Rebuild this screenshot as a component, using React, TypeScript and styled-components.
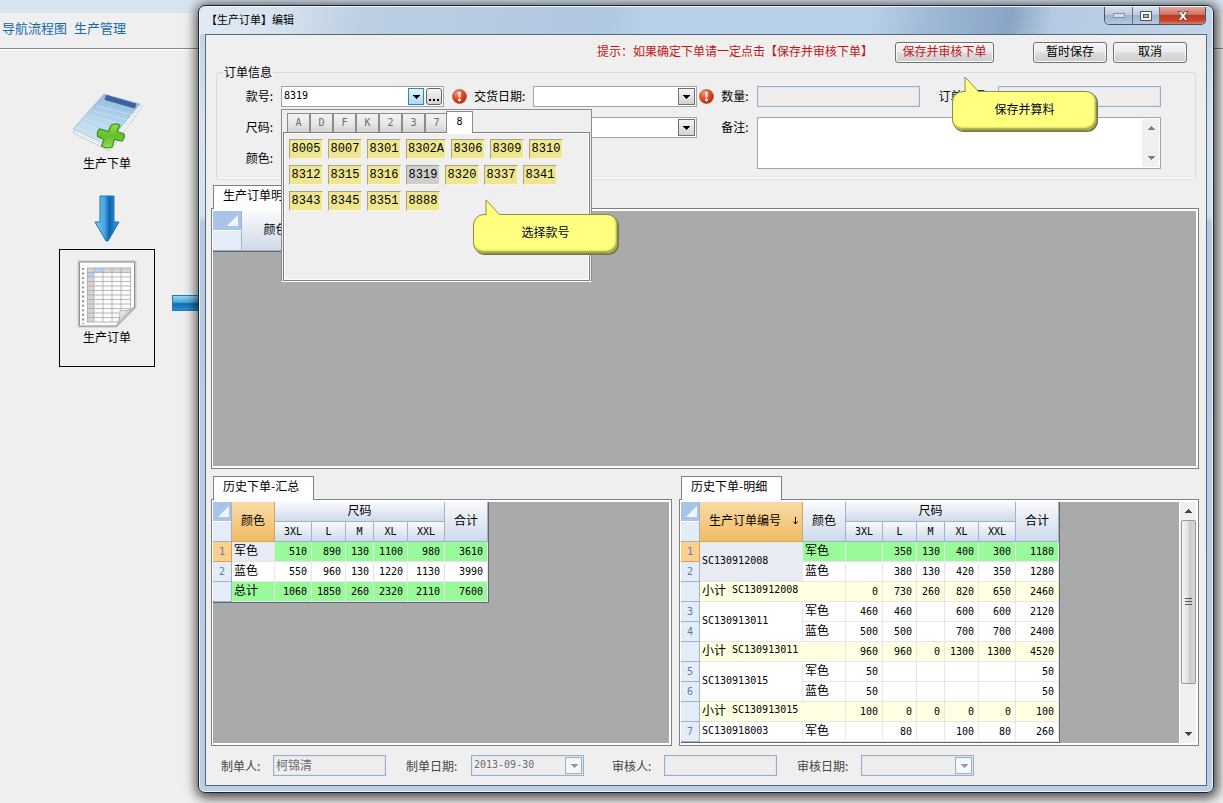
import React, { useState } from "react";
import styled, { createGlobalStyle, css } from "styled-components";

const GlobalStyle = createGlobalStyle`
  *, *::before, *::after { box-sizing: border-box; }
  html, body, #root { height: 100%; }
  body {
    margin: 0;
    background: #efefef;
    color: #000;
    font: 12px/14px "Noto Sans CJK SC", sans-serif;
    overflow: hidden;
  }
  button, input, select, textarea { font: inherit; color: inherit; margin: 0; }
`;

const mono = css`
  font-family: "DejaVu Sans Mono", "Noto Sans CJK SC", monospace;
  font-size: 10px;
`;

/* ---------- desktop ---------- */

const Desktop = styled.div`
  position: relative;
  height: 100%;
  min-height: 600px;
  overflow: hidden;
`;

const TopStrip = styled.div`
  height: 13px;
  background: #d8e4f2;
`;

const NavBar = styled.nav`
  display: flex;
  gap: 7px;
  height: 36px;
  padding: 6px 2px 0;
  border-bottom: 1px solid #868686;
  box-shadow: 0 1px 0 #fff;
  font-size: 13px;
  line-height: 18px;
`;

const NavLink = styled.a`
  color: #1868a8;
  text-decoration: none;
`;

const Flow = styled.aside`
  display: flex;
  flex-direction: column;
  width: 198px;
  padding: 41px 0 0 59px;
`;

const FlowNode = styled.button<{ $selected?: boolean }>`
  display: flex;
  flex-direction: column;
  align-items: center;
  flex: none;
  gap: ${(p) => (p.$selected ? "2px" : "3px")};
  width: 96px;
  height: ${(p) => (p.$selected ? "118px" : "100px")};
  padding: ${(p) => (p.$selected ? "10px 0 0" : "2px 0 0")};
  border: 1px solid ${(p) => (p.$selected ? "#000" : "transparent")};
  background: none;
`;

const FlowArrow = styled.div`
  width: 96px;
  height: 54px;
  padding-top: 2px;
  text-align: center;
  margin-top: 3px;
`;

const FlowRow = styled.div`
  display: flex;
  align-items: center;
  gap: 17px;
  margin-top: 2px;
`;

const FlowLink = styled.div`
  flex: 1;
  height: 16px;
  margin-bottom: 11px;
  border: 1px solid #2878b8;
  border-right: 0;
  background: linear-gradient(#9ad4f4, #4aa6dc 45%, #0f6eb4 55%, #2c8ccc);
`;

/* ---------- window ---------- */

const WindowFrame = styled.section`
  position: absolute;
  inset: 5px 9px 10px 198px;
  display: flex;
  flex-direction: column;
  padding: 0 6px 6px;
  border: 1px solid #1c2530;
  border-radius: 7px;
  background: linear-gradient(#bdd0e6 0, #d6e2f0 120px, #d2e0f0 210px, #b4c9e2 216px, #b9cfe6 100%);
  box-shadow: inset 0 0 0 1px #eef5fc, 1px 2px 12px 3px rgba(0, 0, 0, 0.7);
`;

const TitleBar = styled.header`
  display: flex;
  justify-content: space-between;
  flex: none;
  height: 27px;
  margin: 1px -5px 0;
  padding-left: 6px;
  border-radius: 6px 6px 0 0;
  background: linear-gradient(100deg, #e2ebf5 0, #d3e0ee 9%, #bccfe3 16%, #b0c7e0 40%, #b9d0ea 44%, #b9d0ea 66%, #9fb9d6 72%, #89a5c6 80%, #b4cae2 84%, #c3d5e9 100%);
`;

const Title = styled.h1`
  margin: 0;
  padding-top: 5px;
  font-size: 11px;
  font-weight: 400;
  line-height: 14px;
`;

const Caption = styled.div`
  display: flex;
  height: 18px;
  margin-right: 6px;
  border: 1px solid #46566a;
  border-top: 0;
  border-radius: 0 0 5px 5px;
  overflow: hidden;
`;

const CaptionButton = styled.button<{ $close?: boolean }>`
  display: grid;
  place-items: center;
  width: ${(p) => (p.$close ? "46px" : "27px")};
  padding: 0;
  border: 0;
  border-left: 1px solid #5e7188;
  background: ${(p) =>
    p.$close
      ? "linear-gradient(#e3a89c, #d0705e 45%, #b93a26 50%, #c8452c 80%, #e07a58)"
      : "linear-gradient(#d6e2ee, #bccbdc 45%, #9fb2c8 50%, #b3c8dd)"};
  &:first-child { border-left: 0; }
`;

const Client = styled.main`
  flex: 1;
  display: flex;
  flex-direction: column;
  min-height: 0;
  border: 1px solid #566878;
  background: #efefef;
`;

/* ---------- toolbar ---------- */

const Toolbar = styled.div`
  display: flex;
  justify-content: flex-end;
  align-items: center;
  padding: 7px 19px 0 0;
`;

const Hint = styled.p`
  margin: 0 22px 0 0;
  padding-bottom: 3px;
  color: #c41414;
`;

const Anchor = styled.div`
  position: relative;
  margin-right: 39px;
`;

const PushButton = styled.button<{ $accent?: boolean }>`
  display: block;
  width: ${(p) => (p.$accent ? "99px" : "74px")};
  height: 21px;
  padding: 0 0 3px;
  border: 1px solid #707070;
  border-radius: 3px;
  background: linear-gradient(#f4f4f4, #ebebeb 48%, #dcdcdc 52%, #cecece);
  box-shadow: inset 0 0 0 1px #fafafa;
  color: ${(p) => (p.$accent ? "#c41414" : "#000")};
  line-height: 16px;
  white-space: nowrap;
  & + & { margin-left: 6px; }
`;

/* ---------- form ---------- */

const Group = styled.fieldset`
  flex: none;
  min-width: 0;
  margin: 2px 10px 0;
  padding: 7px 0 10px;
  border: 1px solid #d2dce2;
  border-radius: 3px;
  box-shadow: inset 0 -1px 0 #fff;
`;

const Legend = styled.legend`
  margin-left: 6px;
  padding: 0 1px;
  height: 14px;
`;

const FormGrid = styled.div`
  display: grid;
  grid-template-columns: 64px 1fr 89px 1fr 60px 1fr 78px 1fr;
  grid-auto-rows: 21px;
  row-gap: 10px;
  padding-right: 34px;
`;

const LabelCell = styled.div<{ $start?: boolean }>`
  display: flex;
  align-items: center;
  justify-content: flex-end;
  gap: 7px;
  padding: 0 8px 0 1px;
  grid-column-start: ${(p) => (p.$start ? 1 : "auto")};
  white-space: nowrap;
  label { padding-bottom: 2px; }
`;

const FieldCell = styled.div<{ $col?: string; $row?: string }>`
  position: relative;
  display: flex;
  min-width: 0;
  grid-column: ${(p) => p.$col || "auto"};
  grid-row: ${(p) => p.$row || "auto"};
`;

const Box = styled.div<{ $off?: boolean }>`
  display: flex;
  align-items: center;
  gap: 2px;
  width: 100%;
  height: 21px;
  padding-right: 1px;
  border: 1px solid ${(p) => (p.$off ? "#9aafc3" : "#a4a4a4")};
  background: ${(p) => (p.$off ? "#eeeeef" : "#fff")};
  box-shadow: ${(p) => (p.$off ? "inset 0 0 0 1px #dbe7f2" : "none")};
  color: ${(p) => (p.$off ? "#6d6d6d" : "#000")};
`;

const TextInput = styled.input<{ $mono?: boolean }>`
  flex: 1;
  min-width: 0;
  height: 17px;
  padding: 0 0 2px 2px;
  border: 0;
  outline: 0;
  background: transparent;
  ${(p) => p.$mono && mono}
`;

const Select = styled.select<{ $mono?: boolean }>`
  flex: 1;
  min-width: 0;
  height: 17px;
  padding: 0 0 2px 2px;
  border: 0;
  outline: 0;
  appearance: none;
  background: transparent;
  opacity: 1;
  ${(p) => p.$mono && mono}
`;

const MiniButton = styled.button<{ $hot?: boolean }>`
  display: grid;
  place-items: center;
  flex: none;
  width: 16px;
  height: 17px;
  padding: 0;
  border: 1px solid ${(p) => (p.$hot ? "#3c7fb1" : "#666")};
  border-radius: ${(p) => (p.$hot ? "0" : "3px")};
  background: ${(p) => (p.$hot ? "linear-gradient(#e4f4fc, #a9d9f2)" : "linear-gradient(#f6f6f6, #d4d4d4)")};
`;

const ArrowBox = styled.span<{ $off?: boolean }>`
  display: grid;
  place-items: center;
  flex: none;
  width: 17px;
  height: 17px;
  border: 1px solid ${(p) => (p.$off ? "#9aafc3" : "#707070")};
  background: ${(p) => (p.$off ? "#f4f6f8" : "linear-gradient(#f6f6f6, #d2d2d2)")};
  pointer-events: none;
`;

const MemoBox = styled.div`
  display: flex;
  width: 100%;
  border: 1px solid #a4a4a4;
  background: #fff;
`;

const Memo = styled.textarea`
  flex: 1;
  min-width: 0;
  padding: 2px;
  border: 0;
  outline: 0;
  resize: none;
  background: transparent;
  overflow: hidden;
`;

const MemoScroll = styled.div`
  display: flex;
  flex-direction: column;
  justify-content: space-between;
  align-items: center;
  width: 17px;
  margin: 1px;
  padding: 7px 0;
  background: #f0f0f0;
`;

/* ---------- style number picker ---------- */

const Picker = styled.div`
  position: absolute;
  z-index: 5;
  top: 23px;
  left: 0;
  width: 311px;
  height: 173px;
  display: flex;
  flex-direction: column;
  padding: 1px 1px 0;
  border: 1px solid #8c8c8c;
  border-bottom: 1px solid #fff;
  background: #efefef;
`;

const PickerTabs = styled.div`
  display: flex;
  align-items: flex-end;
  height: 21px;
  padding-left: 4px;
`;

const PickerTab = styled.button<{ $on?: boolean }>`
  position: relative;
  width: ${(p) => (p.$on ? "27px" : "23px")};
  height: ${(p) => (p.$on ? "22px" : "19px")};
  margin: ${(p) => (p.$on ? "0 0 -1px -2px" : "0")};
  padding: 0 0 1px;
  border: 1px solid #8c8c8c;
  border-bottom: 0;
  background: ${(p) => (p.$on ? "#fff" : "linear-gradient(#f2f2f2, #e8e8e8 50%, #d4d4d4)")};
  ${mono}
  color: ${(p) => (p.$on ? "#000" : "#6d6d6d")};
  & + & { border-left-width: ${(p) => (p.$on ? "1px" : "0")}; }
`;

const PickerPage = styled.div`
  flex: 1;
  display: flex;
  flex-wrap: wrap;
  align-content: flex-start;
  gap: 6px 5px;
  padding: 6px 5px;
  border: 1px solid #808080;
  box-shadow: inset 1px 1px 0 #fff, inset -1px -1px 0 #fff;
`;

const Code = styled.button<{ $on?: boolean }>`
  min-width: 34px;
  height: 20px;
  padding: 0 1px;
  border: 1px solid;
  border-color: #a8a48c #fbf8d8 #fbf8d8 #a8a48c;
  background: ${(p) => (p.$on ? "#cecece" : "#eee690")};
  font: 12px/16px "Liberation Mono", monospace;
`;

/* ---------- call-outs ---------- */

const Callout = styled.div<{ $x: number; $y: number }>`
  position: absolute;
  z-index: 10;
  left: ${(p) => p.$x}px;
  top: ${(p) => p.$y}px;
  width: 145px;
  height: 40px;
  display: grid;
  place-items: center;
  padding-bottom: 4px;
  border: 1px solid #8c8c50;
  border-radius: 11px;
  background: #ffff80;
  box-shadow: inset -1px -2px 2px #a0a040, 1px 1px 0 #77773c;
  color: #000030;
  svg { position: absolute; left: 11px; top: -16px; }
`;

/* ---------- tab panels ---------- */

const TabLabel = styled.h2`
  position: relative;
  z-index: 1;
  align-self: flex-start;
  flex: none;
  height: 24px;
  margin: 0 0 -1px 2px;
  padding: 2px 14px 0 9px;
  border: 1px solid #808080;
  border-bottom: 0;
  background: #fff;
  font-size: 12px;
  font-weight: 400;
  line-height: 14px;
`;

const Panel = styled.div`
  display: flex;
  flex: 1;
  min-height: 0;
  padding: 2px 2px 2px 1px;
  border: 1px solid #808080;
  background: #fff;
`;

const Surface = styled.div`
  flex: 1;
  min-width: 0;
  background: #aaa;
  overflow: hidden;
`;

const DetailArea = styled.section`
  display: flex;
  flex: 1;
  flex-direction: column;
  min-height: 0;
  margin: 5px 7px 7px 5px;
`;

const HistoryArea = styled.div`
  display: grid;
  grid-template-columns: 461fr 520fr;
  gap: 7px;
  flex: none;
  height: 270px;
  margin: 0 7px 0 5px;
`;

const HistoryPane = styled.section`
  display: flex;
  flex-direction: column;
  min-width: 0;
  min-height: 0;
`;

/* ---------- tables ---------- */

const Table = styled.table<{ $w: number }>`
  table-layout: fixed;
  width: ${(p) => p.$w}px;
  border-spacing: 0;
  border-right: 1px solid #5c6874;
  border-bottom: 1px solid #5c6874;
`;

const Head = styled.th<{ $hot?: boolean; $mono?: boolean }>`
  height: 20px;
  padding: ${(p) => (p.$mono ? "0" : "0 0 3px")};
  border: solid ${(p) => (p.$hot ? "#d8a45c" : "#9db3cc")};
  border-width: 0 1px 1px 0;
  background: ${(p) => (p.$hot ? "linear-gradient(#f9dba6, #f0bb62)" : "linear-gradient(#f8fafd, #cfdaea)")};
  font-weight: 400;
  line-height: 14px;
  ${(p) => p.$mono && mono}
`;

const Corner = styled.th<{ $wide?: boolean }>`
  height: 40px;
  padding: 0;
  border-right: 1px solid #9db3cc;
  border-bottom: 1px solid #9db3cc;
  background: linear-gradient(#a9c4e9 0 19px, #fff 19px 20px, #e4ecf7 20px);
  vertical-align: top;
  text-align: right;
  svg { display: block; margin: 4px ${(p) => (p.$wide ? "3px" : "2px")} 0 auto; }
`;

const RowHead = styled.th<{ $hot?: boolean }>`
  height: 20px;
  padding: 0;
  border-right: 1px solid ${(p) => (p.$hot ? "#e0a050" : "#9db3cc")};
  border-bottom: 1px solid ${(p) => (p.$hot ? "#e0a050" : "#9db3cc")};
  background: ${(p) => (p.$hot ? "#fad08c" : "#e4ecf7")};
  color: #5480ac;
  font-weight: 400;
  ${mono}
`;

const Cell = styled.td<{ $bg?: string; $num?: boolean }>`
  height: 20px;
  padding: ${(p) => (p.$num ? "0 4px 0 0" : "0 0 3px 2px")};
  border: solid #e6e6ea;
  border-width: 0 1px 1px 0;
  background: ${(p) => p.$bg || "#fff"};
  text-align: ${(p) => (p.$num ? "right" : "left")};
  line-height: 14px;
  white-space: nowrap;
  ${(p) => p.$num && mono}
`;

const Mono = styled.span`
  ${mono}
`;

const Subtotal = styled.span`
  display: flex;
  align-items: center;
  gap: 6px;
`;

const OrderHead = styled.span`
  display: flex;
  justify-content: space-between;
  align-items: center;
  padding: 0 3px 0 9px;
`;

/* ---------- scrollbar ---------- */

const ScrollTrack = styled.div`
  display: flex;
  flex-direction: column;
  align-items: center;
  flex: none;
  width: 17px;
  padding: 7px 0 7px;
  background: #f0f0f0;
  border-left: 1px solid #fff;
`;

const ScrollThumb = styled.div`
  display: grid;
  place-items: center;
  width: 15px;
  height: 164px;
  margin: 7px 0 auto;
  border: 1px solid #979797;
  border-radius: 2px;
  background: linear-gradient(90deg, #f4f4f4, #e4e4e4 45%, #c8c8c8 60%, #dadada);
`;

/* ---------- footer ---------- */

const Footer = styled.footer`
  display: flex;
  flex: none;
  align-items: center;
  height: 39px;
  padding-left: 15px;
  color: #444;
`;

const FooterField = styled.div<{ $label: number; $gap?: number }>`
  display: grid;
  grid-template-columns: ${(p) => p.$label}px 113px;
  align-items: center;
  margin-right: ${(p) => p.$gap || 20}px;
`;

/* ---------- drawings ---------- */

const Caret = ({ color = "#000", up = false }: { color?: string; up?: boolean }) => (
  <svg width="8" height="4" viewBox="0 0 8 4" shapeRendering="crispEdges" aria-hidden="true">
    <path d={up ? "M0 4L4 0L8 4Z" : "M0 0H8L4 4Z"} fill={color} />
  </svg>
);

const CornerMark = () => (
  <svg width="11" height="11" viewBox="0 0 11 11" aria-hidden="true">
    <path d="M11 0V11H0Z" fill="#f1f6fd" />
  </svg>
);

const ErrorIcon = () => (
  <svg width="15" height="15" viewBox="0 0 15 15" role="img" aria-label="必填">
    <defs>
      <radialGradient id="err" cx="0.35" cy="0.25" r="0.85">
        <stop offset="0" stopColor="#f79a78" />
        <stop offset="0.5" stopColor="#e04a22" />
        <stop offset="1" stopColor="#a82408" />
      </radialGradient>
    </defs>
    <circle cx="7.5" cy="7.5" r="7" fill="url(#err)" stroke="#b4401e" strokeWidth="0.6" />
    <path d="M6.2 2.8H8.8L8.3 8.6H6.7Z" fill="#fff" />
    <circle cx="7.5" cy="11" r="1.4" fill="#fff" />
  </svg>
);

const Tail = () => (
  <svg width="17" height="18" viewBox="0 0 17 18" aria-hidden="true">
    <path d="M1 17V1L15 16V18H1Z" fill="#ffff80" />
    <path d="M1 16V1L15 16" fill="none" stroke="#8c8c50" />
  </svg>
);

const NewOrderIcon = () => (
  <svg width="74" height="60" viewBox="0 0 74 60" aria-hidden="true">
    <defs>
      <linearGradient id="pad" x1="0.6" y1="0" x2="0.3" y2="1">
        <stop offset="0" stopColor="#8fb9de" />
        <stop offset="0.5" stopColor="#b5d5ea" />
        <stop offset="1" stopColor="#d3e8f3" />
      </linearGradient>
      <linearGradient id="plus" x1="0" y1="0" x2="0" y2="1">
        <stop offset="0" stopColor="#8fe050" />
        <stop offset="0.5" stopColor="#62c02c" />
        <stop offset="1" stopColor="#93dd58" />
      </linearGradient>
    </defs>
    <path d="M3 40L40 58L72 14L70 12L36 3Z" fill="#fff" stroke="#b4bcc4" strokeWidth="0.8" />
    <path d="M3 38L39 55L71 12" fill="none" stroke="#c4ccd4" strokeWidth="0.8" />
    <path d="M3 36L37 52L70 11L34 1Z" fill="url(#pad)" stroke="#8fb0cc" strokeWidth="0.6" />
    <path d="M36.500 2.500L66 11L64.500 15L35 6.500Z" fill="#3c649c" stroke="#3c649c" strokeLinejoin="round" />
    <path d="M27 13L62 22M23 18L58 27M19 22L54 32M15 26L50 37M11 30L45 42M7 34L40 47" stroke="#d8eaf5" strokeWidth="0.6" />
    <path
      d="M41 32.500C44 30.500 48 31 50 32L47 38.500L54 41C55 43 53.500 47 52 48L44.500 46.500L42 54C38 56 34 54.500 31.500 53L34 46.500L27.500 43.500C27 41 28 37.500 29.500 36L38.500 38.500Z"
      fill="url(#plus)"
      stroke="#3c8c18"
      strokeWidth="1.200"
    />
  </svg>
);

const DownArrowIcon = () => (
  <svg width="26" height="48" viewBox="0 0 26 48" aria-hidden="true">
    <defs>
      <linearGradient id="down" x1="0" x2="1">
        <stop offset="0.15" stopColor="#6cbcec" />
        <stop offset="0.4" stopColor="#4aa4e0" />
        <stop offset="0.6" stopColor="#0c62b0" />
        <stop offset="0.85" stopColor="#2a8cd4" />
      </linearGradient>
    </defs>
    <path d="M6 1H20V27H25L14 46H12L1 27H6Z" fill="url(#down)" stroke="#2474b4" />
  </svg>
);

const SheetIcon = () => (
  <svg width="60" height="68" viewBox="0 0 60 68" aria-hidden="true">
    <defs>
      <linearGradient id="curl" x1="0" y1="0" x2="1" y2="1">
        <stop offset="0.2" stopColor="#fff" />
        <stop offset="0.6" stopColor="#b4b4b4" />
        <stop offset="1" stopColor="#f4f4f4" />
      </linearGradient>
    </defs>
    <path d="M2 2H58V47L39 66H2Z" fill="none" stroke="#c8c8c8" strokeWidth="3" />
    <path d="M2.500 2H57.500V47L39 66H2.500Z" fill="#fbfbfb" stroke="#8e8e8e" />
    <path d="M10.500 8H53.500V12.500H10.500ZM10.500 8H17V62H10.500Z" fill="#d4d4d4" />
    <path d="M17 8H26V12H17ZM11 12H17V17H11Z" fill="#b3cdf8" />
    <path
      d="M10.500 8V62M17 8V62M26 8V62M35 8V62M44 8V53M53.500 8V48M10 8H54M10 12.500H54M10 17H54M10 21.500H54M10 26H54M10 30.500H54M10 35H54M10 39.500H54M10 44H54M10 48.500H54M10 53H42M10 57.500H42M10 62H41"
      stroke="#a9a9a9"
      strokeWidth="0.8"
    />
    <path d="M6 8V64" stroke="#808080" strokeWidth="1.800" strokeDasharray="1.800 2.800" />
    <path d="M58 47C53 51 47 51 43 50.500C43 57 42 62 39 66.500Z" fill="url(#curl)" stroke="#9a9a9a" strokeWidth="0.800" />
  </svg>
);

/* ---------- data ---------- */

const CODES = [
  "8005", "8007", "8301", "8302A", "8306", "8309", "8310",
  "8312", "8315", "8316", "8319", "8320", "8337", "8341",
  "8343", "8345", "8351", "8888",
];

const SIZES = ["3XL", "L", "M", "XL", "XXL"];
const SIZE_WIDTHS = [37, 34, 28, 34, 37, 43];

const SUMMARY = [
  { n: "1", color: "军色", v: [510, 890, 130, 1100, 980, 3610], bg: "#99fa99" },
  { n: "2", color: "蓝色", v: [550, 960, 130, 1220, 1130, 3990], bg: "#ffffff" },
  { n: "", color: "总计", v: [1060, 1850, 260, 2320, 2110, 7600], bg: "#99fa99" },
];

type DetailRow = { n: string; order?: string; span?: number; color?: string; subtotal?: string; v: (number | "")[] };

const DETAILS: DetailRow[] = [
  { n: "1", order: "SC130912008", span: 2, color: "军色", v: ["", 350, 130, 400, 300, 1180] },
  { n: "2", color: "蓝色", v: ["", 380, 130, 420, 350, 1280] },
  { n: "", subtotal: "SC130912008", v: [0, 730, 260, 820, 650, 2460] },
  { n: "3", order: "SC130913011", span: 2, color: "军色", v: [460, 460, "", 600, 600, 2120] },
  { n: "4", color: "蓝色", v: [500, 500, "", 700, 700, 2400] },
  { n: "", subtotal: "SC130913011", v: [960, 960, 0, 1300, 1300, 4520] },
  { n: "5", order: "SC130913015", span: 2, color: "军色", v: [50, "", "", "", "", 50] },
  { n: "6", color: "蓝色", v: [50, "", "", "", "", 50] },
  { n: "", subtotal: "SC130913015", v: [100, 0, 0, 0, 0, 100] },
  { n: "7", order: "SC130918003", span: 1, color: "军色", v: ["", 80, "", 100, 80, 260] },
];

const Cols = ({ lead }: { lead: number[] }) => (
  <colgroup>
    {[...lead, ...SIZE_WIDTHS].map((w, i) => (
      <col key={i} width={w} />
    ))}
  </colgroup>
);

const SizeHeads = () => (
  <tr>
    {SIZES.map((s) => (
      <Head key={s} $mono>{s}</Head>
    ))}
  </tr>
);

export default function App() {
  const [code, setCode] = useState("8319");

  return (
    <Desktop>
      <GlobalStyle />
      <TopStrip />
      <NavBar>
        <NavLink href="#flow">导航流程图</NavLink>
        <NavLink href="#production">生产管理</NavLink>
      </NavBar>
      <Flow>
        <FlowNode>
          <NewOrderIcon />
          生产下单
        </FlowNode>
        <FlowArrow>
          <DownArrowIcon />
        </FlowArrow>
        <FlowRow>
          <FlowNode $selected>
            <SheetIcon />
            生产订单
          </FlowNode>
          <FlowLink />
        </FlowRow>
      </Flow>

      <WindowFrame>
        <TitleBar>
          <Title>【生产订单】编辑</Title>
          <Caption>
            <CaptionButton aria-label="最小化">
              <svg width="12" height="5" viewBox="0 0 12 5"><rect x="0.500" y="0.500" width="11" height="4" fill="#d4dde6" stroke="#8493a4" /></svg>
            </CaptionButton>
            <CaptionButton aria-label="最大化">
              <svg width="12" height="10" viewBox="0 0 12 10">
                <rect x="0.500" y="0.500" width="11" height="9" fill="#fff" stroke="#4c5868" />
                <rect x="3.500" y="3.500" width="5" height="3" fill="#a8b8ca" stroke="#4c5868" />
              </svg>
            </CaptionButton>
            <CaptionButton $close aria-label="关闭">
              <svg width="12" height="10" viewBox="0 0 12 10">
                <path d="M1 0.500H4L6 3L8 0.500H11L7.700 5L11 9.500H8L6 7L4 9.500H1L4.300 5Z" fill="#fff" stroke="#5c3c3c" strokeWidth="0.800" />
              </svg>
            </CaptionButton>
          </Caption>
        </TitleBar>

        <Client>
          <Toolbar>
            <Hint>提示：如果确定下单请一定点击【保存并审核下单】</Hint>
            <Anchor>
              <PushButton $accent>保存并审核下单</PushButton>
              <Callout $x={57} $y={49}>
                <Tail />
                保存并算料
              </Callout>
            </Anchor>
            <PushButton>暂时保存</PushButton>
            <PushButton>取消</PushButton>
          </Toolbar>

          <Group>
            <Legend>订单信息</Legend>
            <FormGrid>
              <LabelCell><label htmlFor="style">款号:</label></LabelCell>
              <FieldCell>
                <Box>
                  <TextInput id="style" $mono value={code} onChange={(e) => setCode(e.target.value)} />
                  <MiniButton $hot aria-label="展开款号"><Caret /></MiniButton>
                  <MiniButton aria-label="浏览">
                    <svg width="10" height="10" viewBox="0 0 10 10"><path d="M0 7H2V9H0ZM4 7H6V9H4ZM8 7H10V9H8Z" /></svg>
                  </MiniButton>
                </Box>
                <Picker>
                  <PickerTabs>
                    {["A", "D", "F", "K", "2", "3", "7", "8"].map((t) => (
                      <PickerTab key={t} $on={t === "8"}>{t}</PickerTab>
                    ))}
                  </PickerTabs>
                  <PickerPage>
                    {CODES.map((c) => (
                      <Code key={c} $on={c === code} onClick={() => setCode(c)}>{c}</Code>
                    ))}
                  </PickerPage>
                  <Callout $x={191} $y={104}>
                    <Tail />
                    选择款号
                  </Callout>
                </Picker>
              </FieldCell>
              <LabelCell>
                <ErrorIcon />
                <label htmlFor="due">交货日期:</label>
              </LabelCell>
              <FieldCell>
                <Box>
                  <Select id="due"><option></option></Select>
                  <ArrowBox><Caret /></ArrowBox>
                </Box>
              </FieldCell>
              <LabelCell>
                <ErrorIcon />
                <label htmlFor="qty">数量:</label>
              </LabelCell>
              <FieldCell><Box $off><TextInput id="qty" disabled /></Box></FieldCell>
              <LabelCell><label htmlFor="orderno">订单编号:</label></LabelCell>
              <FieldCell><Box $off><TextInput id="orderno" disabled /></Box></FieldCell>

              <LabelCell $start><label htmlFor="size">尺码:</label></LabelCell>
              <FieldCell $col="2 / 5">
                <Box>
                  <Select id="size"><option></option></Select>
                  <ArrowBox><Caret /></ArrowBox>
                </Box>
              </FieldCell>
              <LabelCell><label htmlFor="memo">备注:</label></LabelCell>
              <FieldCell $col="6 / 9" $row="2 / 4">
                <MemoBox>
                  <Memo id="memo" />
                  <MemoScroll>
                    <Caret up color="#808080" />
                    <Caret color="#808080" />
                  </MemoScroll>
                </MemoBox>
              </FieldCell>

              <LabelCell $start><label htmlFor="color">颜色:</label></LabelCell>
              <FieldCell>
                <Box>
                  <Select id="color"><option></option></Select>
                  <ArrowBox><Caret /></ArrowBox>
                </Box>
              </FieldCell>
            </FormGrid>
          </Group>

          <DetailArea>
            <TabLabel>生产订单明细</TabLabel>
            <Panel>
              <Surface>
                <Table $w={98}>
                  <colgroup>
                    <col width={29} />
                    <col width={68} />
                  </colgroup>
                  <thead>
                    <tr>
                      <Corner $wide><CornerMark /></Corner>
                      <Head>颜色</Head>
                    </tr>
                  </thead>
                </Table>
              </Surface>
            </Panel>
          </DetailArea>

          <HistoryArea>
            <HistoryPane>
              <TabLabel>历史下单-汇总</TabLabel>
              <Panel>
                <Surface>
                  <Table $w={276}>
                    <Cols lead={[19, 43]} />
                    <thead>
                      <tr>
                        <Corner rowSpan={2}><CornerMark /></Corner>
                        <Head rowSpan={2} $hot>颜色</Head>
                        <Head colSpan={5}>尺码</Head>
                        <Head rowSpan={2}>合计</Head>
                      </tr>
                      <SizeHeads />
                    </thead>
                    <tbody>
                      {SUMMARY.map((r, i) => (
                        <tr key={i}>
                          <RowHead $hot={i === 0}>{r.n}</RowHead>
                          <Cell $bg={i === 0 ? "#e8eaf4" : r.bg}>{r.color}</Cell>
                          {r.v.map((v, j) => (
                            <Cell key={j} $num $bg={r.bg}>{v}</Cell>
                          ))}
                        </tr>
                      ))}
                    </tbody>
                  </Table>
                </Surface>
              </Panel>
            </HistoryPane>

            <HistoryPane>
              <TabLabel>历史下单-明细</TabLabel>
              <Panel>
                <Surface>
                  <Table $w={379}>
                    <Cols lead={[19, 103, 43]} />
                    <thead>
                      <tr>
                        <Corner rowSpan={2}><CornerMark /></Corner>
                        <Head rowSpan={2} $hot>
                          <OrderHead>
                            生产订单编号
                            <svg width="7" height="9" viewBox="0 0 7 9" aria-label="降序">
                              <path d="M3.500 1V8M1.500 5.500L3.500 8L5.500 5.500" fill="none" stroke="#000" />
                            </svg>
                          </OrderHead>
                        </Head>
                        <Head rowSpan={2}>颜色</Head>
                        <Head colSpan={5}>尺码</Head>
                        <Head rowSpan={2}>合计</Head>
                      </tr>
                      <SizeHeads />
                    </thead>
                    <tbody>
                      {DETAILS.map((r, i) => {
                        const bg = r.subtotal ? "#ffffe1" : i === 0 ? "#99fa99" : "#ffffff";
                        return (
                          <tr key={i}>
                            <RowHead $hot={i === 0}>{r.n}</RowHead>
                            {r.subtotal && (
                              <Cell colSpan={2} $bg={bg}>
                                <Subtotal>
                                  小计 <Mono>{r.subtotal}</Mono>
                                </Subtotal>
                              </Cell>
                            )}
                            {r.order && (
                              <Cell rowSpan={r.span} $bg={i === 0 ? "#e8eaf4" : bg}>
                                <Mono>{r.order}</Mono>
                              </Cell>
                            )}
                            {r.color && <Cell $bg={bg}>{r.color}</Cell>}
                            {r.v.map((v, j) => (
                              <Cell key={j} $num $bg={bg}>{v}</Cell>
                            ))}
                          </tr>
                        );
                      })}
                    </tbody>
                  </Table>
                </Surface>
                <ScrollTrack>
                  <Caret up color="#444" />
                  <ScrollThumb>
                    <svg width="7" height="8" viewBox="0 0 7 8" aria-hidden="true">
                      <path d="M0 0.500H7M0 3.500H7M0 6.500H7" stroke="#555" />
                    </svg>
                  </ScrollThumb>
                  <Caret color="#444" />
                </ScrollTrack>
              </Panel>
            </HistoryPane>
          </HistoryArea>

          <Footer>
            <FooterField $label={52}>
              <label htmlFor="maker">制单人:</label>
              <Box $off><TextInput id="maker" disabled defaultValue="柯锦清" /></Box>
            </FooterField>
            <FooterField $label={65} $gap={28}>
              <label htmlFor="made">制单日期:</label>
              <Box $off>
                <Select id="made" $mono disabled><option>2013-09-30</option></Select>
                <ArrowBox $off><Caret color="#9a9a9a" /></ArrowBox>
              </Box>
            </FooterField>
            <FooterField $label={52}>
              <label htmlFor="auditor">审核人:</label>
              <Box $off><TextInput id="auditor" disabled /></Box>
            </FooterField>
            <FooterField $label={64}>
              <label htmlFor="audited">审核日期:</label>
              <Box $off>
                <Select id="audited" disabled><option></option></Select>
                <ArrowBox $off><Caret color="#9a9a9a" /></ArrowBox>
              </Box>
            </FooterField>
          </Footer>
        </Client>
      </WindowFrame>
    </Desktop>
  );
}
